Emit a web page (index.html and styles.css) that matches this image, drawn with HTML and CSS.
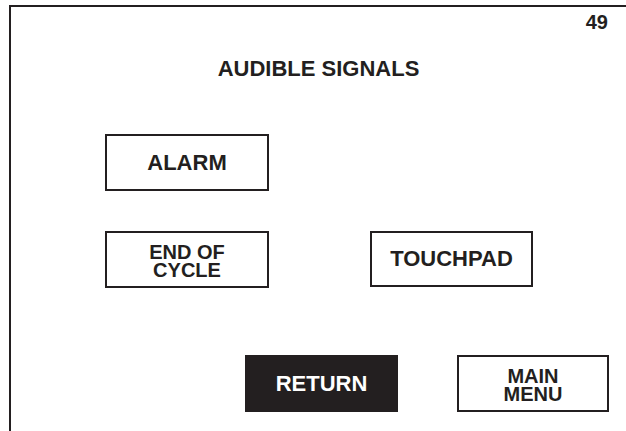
FILE: index.html
```html
<!DOCTYPE html>
<html>
<head>
    <meta http-equiv="Content-Type" content="text/html; charset=UTF-8">
    <title>Audible Signals</title>
    <link rel="stylesheet" href="styles.css">
</head>
<body>
<div class="panel">
    <div class="head">
        <span class="page-num">49</span>
        <h1 class="title">AUDIBLE SIGNALS</h1>
    </div>
    <div class="row row-one">
        <a href="#" class="key">ALARM</a>
    </div>
    <div class="row row-two">
        <a href="#" class="key key-two">END OF<br>CYCLE</a>
        <a href="#" class="key key-touch">TOUCHPAD</a>
    </div>
    <div class="row row-three">
        <a href="#" class="key key-dark">RETURN</a>
        <a href="#" class="key key-two key-menu">MAIN<br>MENU</a>
    </div>
</div>
</body>
</html>
```

FILE: styles.css
```css
body{margin:0; background:#fff; font-family:"Liberation Sans", Arial, sans-serif; font-weight:bold; color:#231f20;}
.panel{margin:5px 0 0 9px; height:426px; border-top:2px solid #231f20; border-left:2px solid #231f20; box-sizing:border-box;}
.head{height:127px; box-sizing:border-box; padding-top:5px;}
.page-num{float:right; margin:0 18px 0 0; font-size:20px; line-height:20px;}
.title{margin:0; padding-top:46px; text-align:center; font-size:22px; line-height:22px; font-weight:bold;}

.row{display:flex;}
.row-one{padding-left:94px;}
.row-two{padding-left:94px; margin-top:40px; gap:101px;}
.row-three{padding-left:234px; margin-top:67px; gap:59px;}

.key{display:flex; align-items:center; justify-content:center; width:164px; height:57px; box-sizing:border-box;
    border:2px solid #231f20; color:#231f20; text-decoration:none; text-align:center; font-size:22px; line-height:22px;}
.key-two{font-size:20px; line-height:18px; padding-top:2px;}
.key-touch{width:163px; height:56px;}
.key-dark{width:153px; background:#231f20; color:#fff;}
.key-menu{width:152px;}
```
